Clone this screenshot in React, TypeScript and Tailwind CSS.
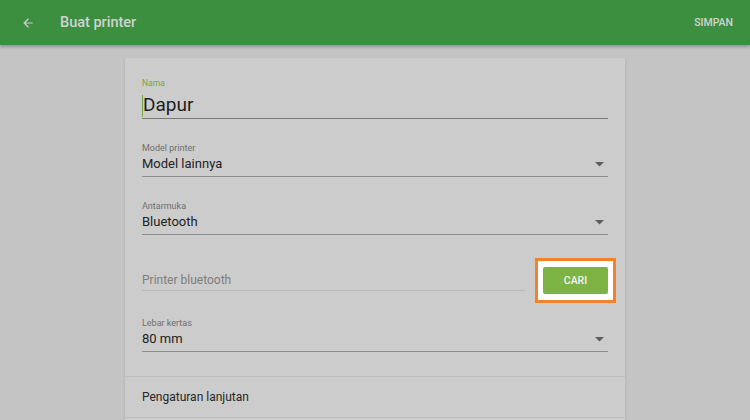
import React from "react";

const Caret = () => (
  <svg width="9" height="5" viewBox="0 0 9 5" className="mr-[4px] mt-[6px]">
    <path d="M0 0 L9 0 L4.5 4.5 Z" fill="#5e5e5e" />
  </svg>
);

const SelectField = ({ label, value }: { label: string; value: string }) => (
  <div className="flex flex-col">
    <span className="text-[9px] leading-[12px] text-[#6e6e6e]">{label}</span>
    <div className="flex h-[23px] items-start justify-between border-b border-[#8e8e8e] pt-[1.5px]">
      <span className="text-[13px] leading-[16px] text-[#222]">{value}</span>
      <Caret />
    </div>
  </div>
);

export default function App() {
  return (
    <div
      className="relative h-[420px] w-[750px] overflow-hidden bg-[#c4c4c4]"
      style={{ fontFamily: "Roboto, 'Liberation Sans', sans-serif" }}
    >
      {/* app bar */}
      <div className="relative z-10 flex h-[45px] items-center bg-[#3d8f40] shadow-[0_2px_3px_rgba(0,0,0,0.25)]">
        <svg width="14" height="14" viewBox="0 0 24 24" className="ml-[21px]">
          <path d="M20 11H7.83l5.59-5.59L12 4l-8 8 8 8 1.41-1.41L7.83 13H20v-2z" fill="#cfcfcf" />
        </svg>
        <span className="ml-[25px] text-[14.5px] font-medium text-[#d2d2d2]">Buat printer</span>
        <span className="ml-auto mr-[17px] text-[10.5px] font-medium text-[#d2d2d2]">SIMPAN</span>
      </div>

      {/* card */}
      <div className="mx-auto mt-[13px] w-[500px] bg-[#cccccc] shadow-[0_1px_3px_rgba(0,0,0,0.12)]">
        <div className="px-[17px] pt-[20px]">
          <div className="flex flex-col">
            <span className="text-[8.5px] leading-[11px] text-[#74a84a]">Nama</span>
            <div className="mt-[4px] flex h-[26px] items-center border-b-[1.5px] border-[#7a7a7a]">
              <span className="h-[22px] w-px bg-[#74a84a]" />
              <span className="text-[19px] text-[#1e1e1e]">Dapur</span>
            </div>
          </div>

          <div className="mt-[23px]">
            <SelectField label="Model printer" value="Model lainnya" />
          </div>
          <div className="mt-[23px]">
            <SelectField label="Antarmuka" value="Bluetooth" />
          </div>

          <div className="mt-[23px] flex items-center">
            <div className="flex h-[21px] flex-1 items-center border-b border-[#bababa]">
              <span className="text-[12px] text-[#7e7e7e]">Printer bluetooth</span>
            </div>
            <div className="ml-[10px] mr-[-8px] border-[3px] border-[#f08330] bg-white px-[5px] py-[6px]">
              <div className="flex h-[27px] w-[65px] items-center justify-center rounded-[2px] bg-[#7db343] text-[10.5px] font-medium text-[#f3f3f3]">
                CARI
              </div>
            </div>
          </div>

          <div className="mt-[14px] pb-[24px]">
            <SelectField label="Lebar kertas" value="80 mm" />
          </div>
        </div>
        <div className="flex h-[41px] items-center border-t border-[#bfbfbf] px-[17px]">
          <span className="text-[12px] leading-[16px] text-[#262626]">Pengaturan lanjutan</span>
        </div>
        <div className="h-[10px] border-t border-[#bfbfbf]" />
      </div>
    </div>
  );
}
